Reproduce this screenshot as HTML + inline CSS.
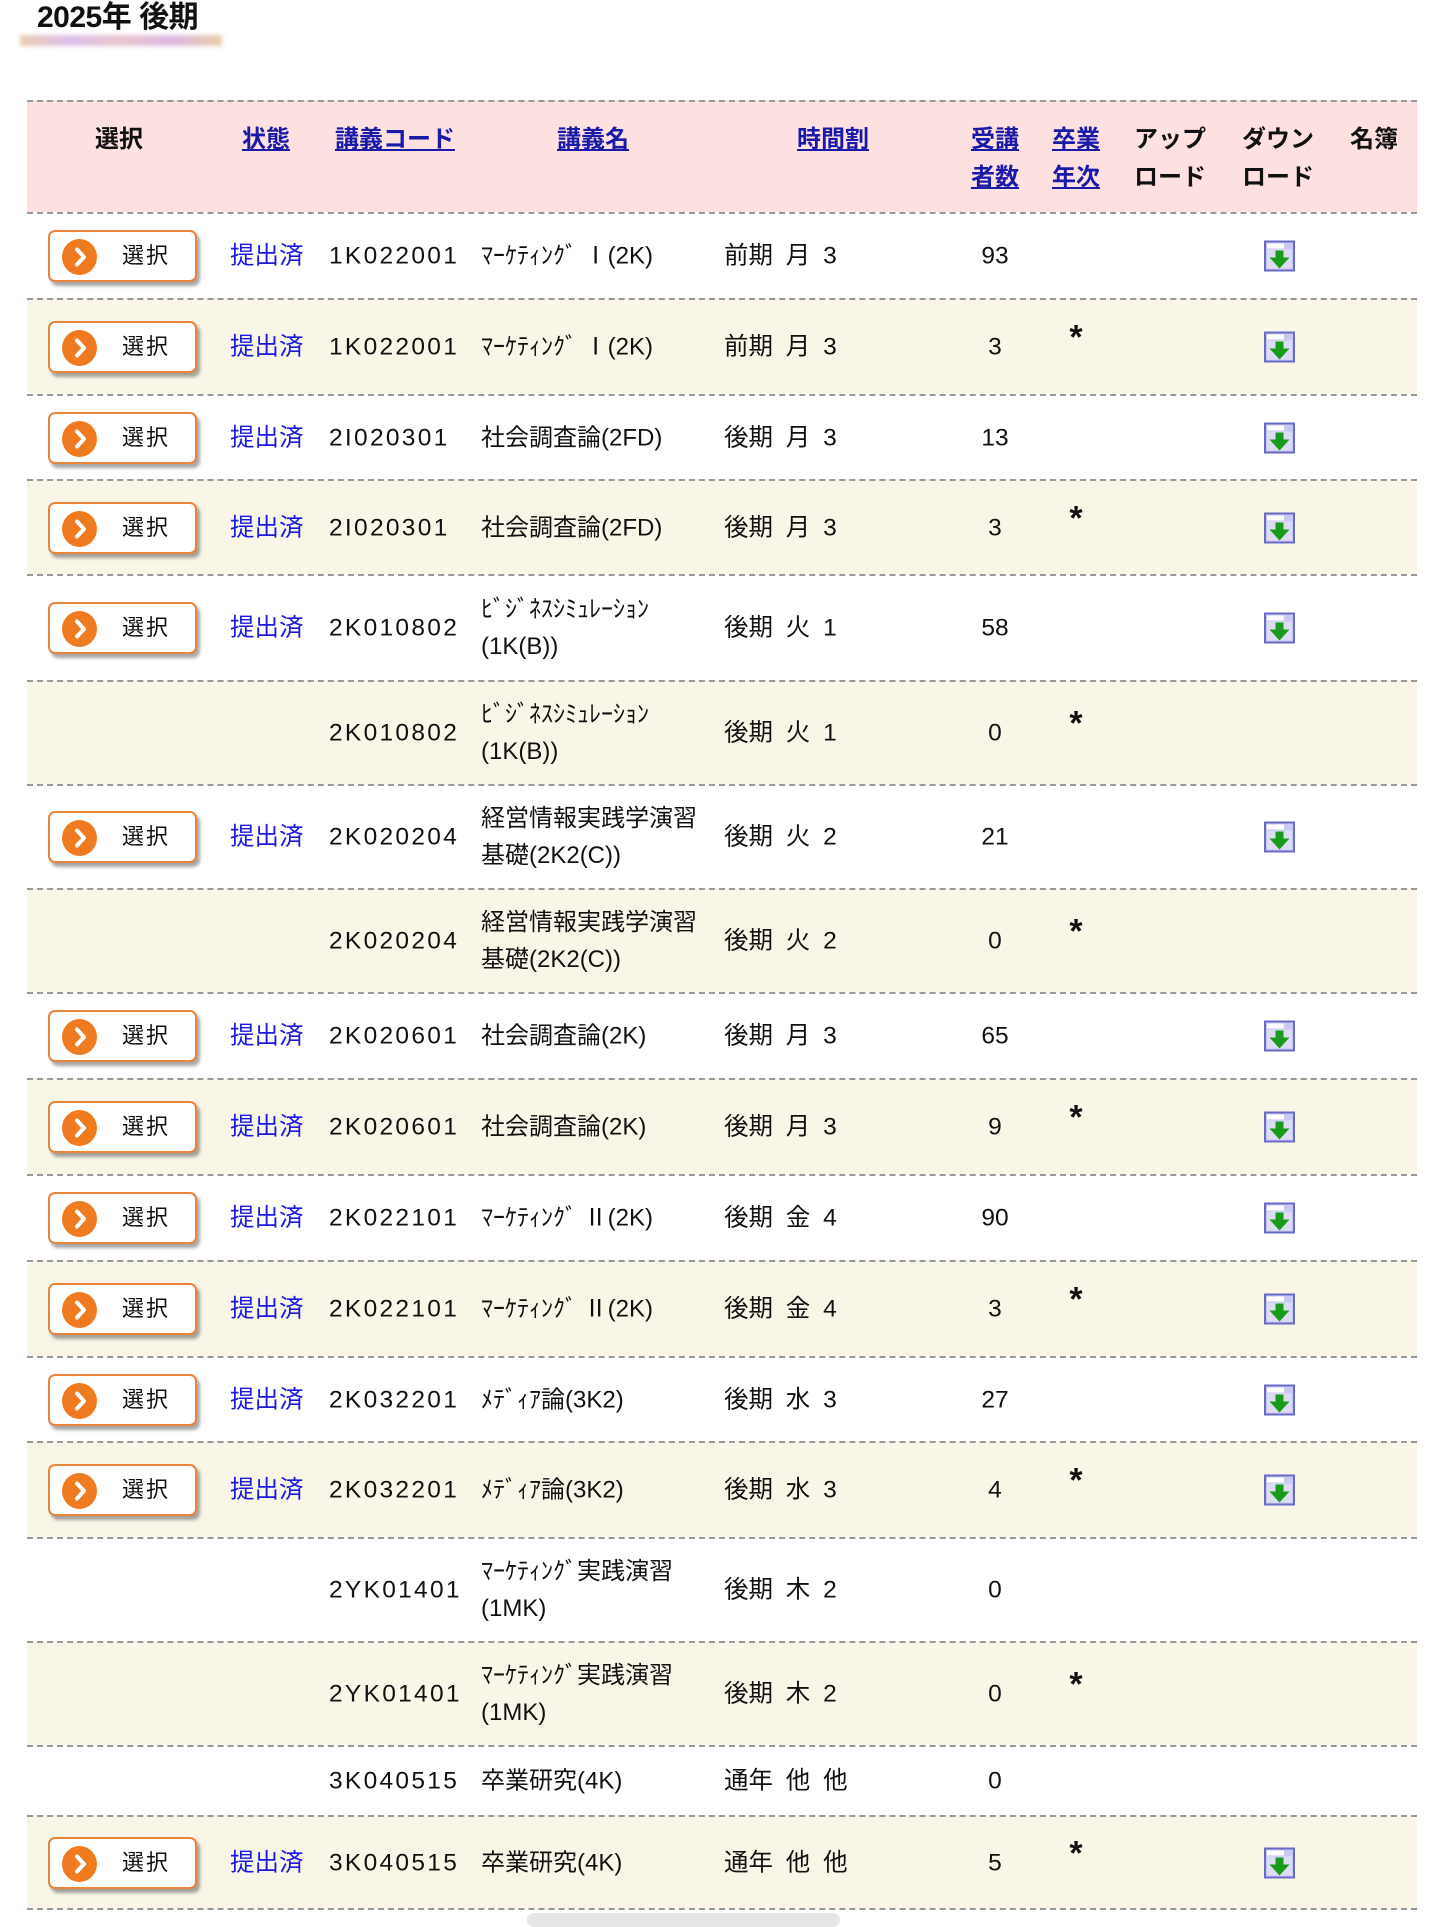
<!DOCTYPE html>
<html><head><meta charset="utf-8">
<style>
*{margin:0;padding:0;box-sizing:border-box}
body{width:1440px;height:1920px;background:#fff;position:relative;overflow:hidden;font-family:"Liberation Sans","Noto Sans CJK JP",sans-serif;color:#111}
.title{position:absolute;left:37px;top:-8px;font-size:30px;font-weight:bold;letter-spacing:-0.5px}
.uline{position:absolute;left:20px;top:35px;width:202px;height:11px;background:linear-gradient(90deg,#e8c8a8,#d8b8e8,#e8c0c8,#d8b0e0,#e8c8a0);filter:blur(2px);opacity:.9}
.row{position:absolute;left:27px;width:1390px;border-top:2px dashed #999}
.hd{background:#fde0e0}
.w{background:#fff}
.c{background:#f9f6e8}
.a{position:absolute;top:50%;transform:translateY(-50%);font-size:24.5px;line-height:37px;white-space:nowrap}
.cc{transform:translate(-50%,-50%);text-align:center}
.hb{font-weight:bold;font-size:24px;line-height:38px}
.lk{color:#1a1aa8;text-decoration:underline}
.blue{color:#1a1ae0}
.btn{position:absolute;left:21px;top:50%;transform:translateY(-50%);width:149px;height:52px;border:2px solid #e8843c;border-radius:7px;background:#fff;box-shadow:3px 4px 3px rgba(0,0,0,.35)}
.btn .o{position:absolute;left:12px;top:7px;width:35px;height:36px;border-radius:50%;background:#f07a20}
.btn .o svg{position:absolute;left:0;top:0}
.btn span{position:absolute;left:72px;top:11px;font-size:22px;line-height:26px;letter-spacing:2px}
.ic{position:absolute;left:1237px;top:50%;transform:translateY(-50%);width:31px;height:31px}
.ast{font-size:34px;font-weight:bold;margin-top:-9px}
</style></head><body>
<div class="title">2025年 後期</div>
<div class="uline"></div>

<div class="row hd" style="top:100px;height:112px">
<div class="a cc hb" style="left:92px;top:38px">選択</div>
<div class="a cc hb lk" style="left:239px;top:38px">状態</div>
<div class="a cc hb lk" style="left:368px;top:38px">講義コード</div>
<div class="a cc hb lk" style="left:566px;top:38px">講義名</div>
<div class="a cc hb lk" style="left:806px;top:38px">時間割</div>
<div class="a cc hb lk" style="left:968px;top:57px">受講<br>者数</div>
<div class="a cc hb lk" style="left:1049px;top:57px">卒業<br>年次</div>
<div class="a cc hb" style="left:1143px;top:57px">アップ<br>ロード</div>
<div class="a cc hb" style="left:1251px;top:57px">ダウン<br>ロード</div>
<div class="a cc hb" style="left:1347px;top:38px">名簿</div>
</div>

<div id="rows"></div>
<div style="position:absolute;left:27px;top:1908px;width:1390px;border-top:2px dashed #999"></div>
<div style="position:absolute;left:527px;top:1913px;width:313px;height:14px;border-radius:7px;background:#e6e6e6"></div>

<script>
var rows=[
[212,298,1,'1K022001','ﾏｰｹﾃｨﾝｸﾞ Ⅰ(2K)','前期 月 3','93',0,1],
[298,394,1,'1K022001','ﾏｰｹﾃｨﾝｸﾞ Ⅰ(2K)','前期 月 3','3',1,1],
[394,479,1,'2I020301','社会調査論(2FD)','後期 月 3','13',0,1],
[479,574,1,'2I020301','社会調査論(2FD)','後期 月 3','3',1,1],
[574,680,1,'2K010802','ﾋﾞｼﾞﾈｽｼﾐｭﾚｰｼｮﾝ<br>(1K(B))','後期 火 1','58',0,1],
[680,784,0,'2K010802','ﾋﾞｼﾞﾈｽｼﾐｭﾚｰｼｮﾝ<br>(1K(B))','後期 火 1','0',1,0],
[784,888,1,'2K020204','経営情報実践学演習<br>基礎(2K2(C))','後期 火 2','21',0,1],
[888,992,0,'2K020204','経営情報実践学演習<br>基礎(2K2(C))','後期 火 2','0',1,0],
[992,1078,1,'2K020601','社会調査論(2K)','後期 月 3','65',0,1],
[1078,1174,1,'2K020601','社会調査論(2K)','後期 月 3','9',1,1],
[1174,1260,1,'2K022101','ﾏｰｹﾃｨﾝｸﾞ Ⅱ(2K)','後期 金 4','90',0,1],
[1260,1356,1,'2K022101','ﾏｰｹﾃｨﾝｸﾞ Ⅱ(2K)','後期 金 4','3',1,1],
[1356,1441,1,'2K032201','ﾒﾃﾞｨｱ論(3K2)','後期 水 3','27',0,1],
[1441,1537,1,'2K032201','ﾒﾃﾞｨｱ論(3K2)','後期 水 3','4',1,1],
[1537,1641,0,'2YK01401','ﾏｰｹﾃｨﾝｸﾞ実践演習<br>(1MK)','後期 木 2','0',0,0],
[1641,1745,0,'2YK01401','ﾏｰｹﾃｨﾝｸﾞ実践演習<br>(1MK)','後期 木 2','0',1,0],
[1745,1815,0,'3K040515','卒業研究(4K)','通年 他 他','0',0,0],
[1815,1909,1,'3K040515','卒業研究(4K)','通年 他 他','5',1,1]
];
var h='';
rows.forEach(function(r,i){
 h+='<div class="row '+(i%2?'c':'w')+'" style="top:'+r[0]+'px;height:'+(r[1]-r[0])+'px">';
 if(r[2]) h+='<div class="btn"><div class="o"><svg width="35" height="36"><path d="M15 10.5 L22 18 L15 25.5" stroke="#fff" stroke-width="4" fill="none" stroke-linecap="round" stroke-linejoin="round"/></svg></div><span>選択</span></div><div class="a blue" style="left:203px">提出済</div>';
 h+='<div class="a" style="left:302px;letter-spacing:2.3px">'+r[3]+'</div>';
 h+='<div class="a" style="left:454px;font-size:24px">'+r[4]+'</div>';
 h+='<div class="a" style="left:697px;word-spacing:6px">'+r[5]+'</div>';
 h+='<div class="a cc" style="left:968px">'+r[6]+'</div>';
 if(r[7]) h+='<div class="a cc ast" style="left:1049px">*</div>';
 if(r[8]) h+='<div class="ic"><svg width="31" height="31"><rect x="1" y="1" width="29" height="29" fill="#c8c8f0" stroke="#6a6ac8" stroke-width="2"/><rect x="3" y="3" width="17" height="5" fill="#fff"/><rect x="3" y="9" width="25" height="19" fill="#dcdcf4"/><path d="M11.5 10 h8 v7 h6 l-10 11 l-10 -11 h6z" fill="#1a9a1a"/></svg></div>';
 h+='</div>';
});
document.getElementById('rows').innerHTML=h;
</script>
</body></html>
